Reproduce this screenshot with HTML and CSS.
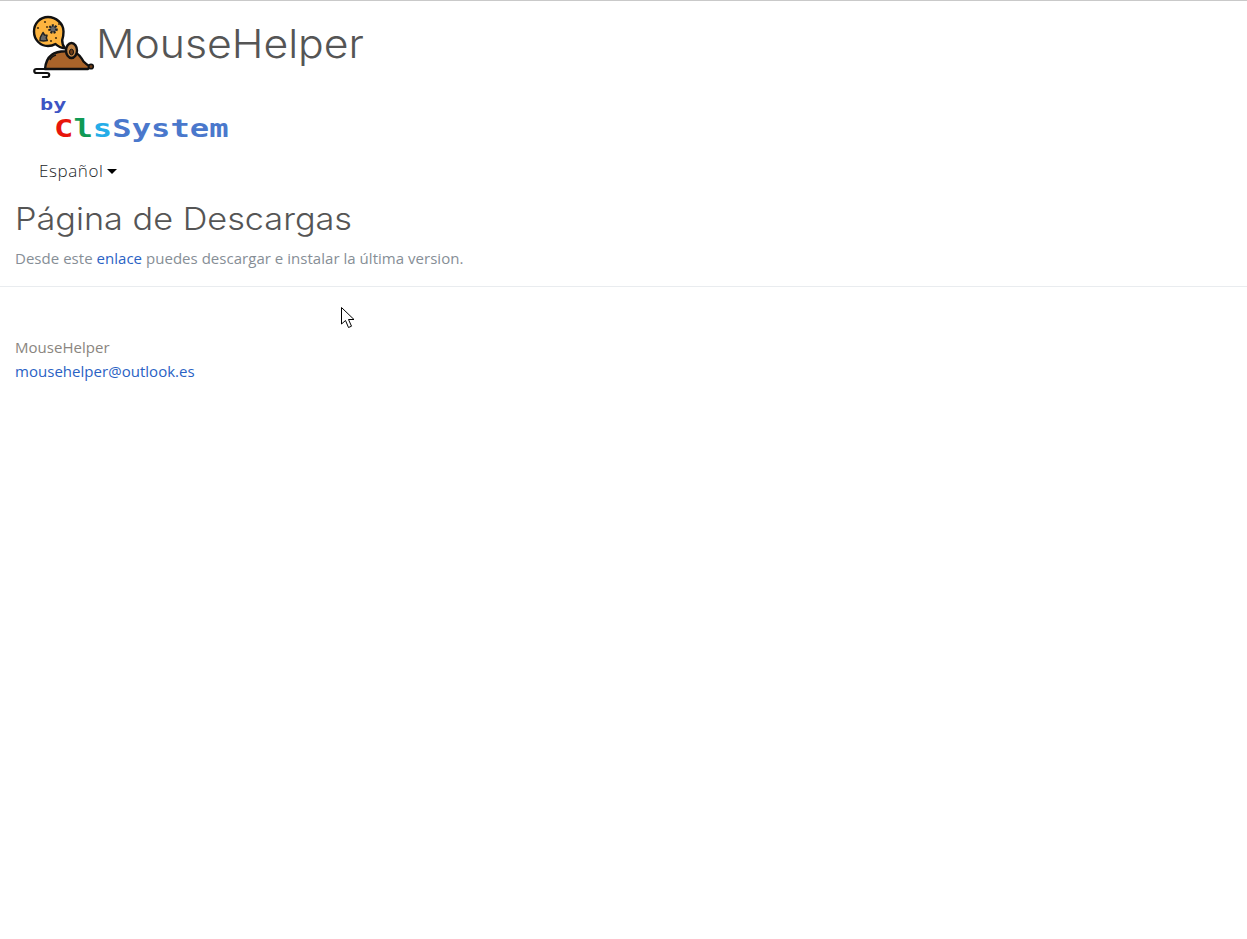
FILE: index.html
```html
<!DOCTYPE html>
<html lang="es">
<head>
<meta charset="utf-8">
<title>MouseHelper</title>
<link rel="stylesheet" href="styles.css">
</head>
<body>
<header class="top">
  <div class="brand">
    <svg class="logo" width="64" height="65" viewBox="0 0 64 65" aria-hidden="true">
      <path d="M16 4C8 4 2 10.500 2 18.500S8 33 16 33c3 0 5.500-.8 7.500-2 2.500 2.500 5.500 4 9.500 4.300-2-2.500-3-5-2.800-8.300.9-2.500 1.300-5 1.300-8.500C31.500 10.500 24 4 16 4Z" fill="#fdb43f" stroke="#111" stroke-width="2.400" stroke-linejoin="round"/>
      <circle cx="21" cy="16" r="3.500" fill="#666" stroke="#222" stroke-width="2.600" stroke-dasharray="1.800 1.200"/>
      <path d="M11 19.500l1.500 2.500 2.500.3-.7 2.700 1 2.500-3.800.5-3.500-.5.300-3 1-2Z" fill="#666" stroke="#222" stroke-width="1.500" stroke-linejoin="round"/>
      <g fill="#4a3210">
        <circle cx="13" cy="9" r="1.100"/><circle cx="24" cy="25" r="1.100"/><circle cx="19" cy="28" r="1.100"/><circle cx="6" cy="15" r="1.100"/><circle cx="27" cy="11" r="1"/><circle cx="15" cy="14" r="1"/>
      </g>
      <path d="M13 56c.5-6 2.500-11 6.500-14 3.500-2.800 8.500-3.800 14-3.800 4-.3 7 .3 10.500 1.800 3.500 1.500 5.500 5 7.500 8.500 2 2 4 3.500 6 5l-1.500 2.500H13Z" fill="#a9642a" stroke="#111" stroke-width="2.400" stroke-linejoin="round"/>
      <ellipse cx="39.500" cy="37.500" rx="5.500" ry="7.500" fill="#c08445" stroke="#111" stroke-width="2.400"/>
      <ellipse cx="39.500" cy="39" rx="2" ry="2.800" fill="#6d3c16" stroke="#111" stroke-width="1"/>
      <circle cx="59" cy="53.500" r="2.300" fill="#6d3c16" stroke="#111" stroke-width="1.600"/>
      <path d="M18 47c1-2.500 3-4 6-5" fill="none" stroke="#111" stroke-width="1.500"/>
      <path d="M14 56H4.500c-3 0-3 4 0 4H15c3 0 3 4 0 4H11" fill="none" stroke="#111" stroke-width="2.200" stroke-linecap="round"/>
    </svg>
    <span class="brand-name">MouseHelper</span>
  </div>
  <div class="byline">
    <div class="by">by</div>
    <div class="cls"><span class="c-red">C</span><span class="c-green">l</span><span class="c-sky">s</span><span class="c-blue">System</span></div>
  </div>
  <div class="lang"><span>Español</span><i class="caret"></i></div>
</header>
<main class="content">
  <h1 class="title">Página de Descargas</h1>
  <p class="lead">Desde este <a href="#">enlace</a> puedes descargar e instalar la última version.</p>
</main>
<hr class="rule">
<footer class="foot">
  <div>MouseHelper</div>
  <a href="#">mousehelper@outlook.es</a>
</footer>
<svg class="cursor" width="14" height="23" viewBox="0 0 14 23" aria-hidden="true">
  <path d="M.5.5V17l4-3.500 3 7 3-1.300-3-6.700H13Z" fill="#fff" stroke="#000" stroke-width="1"/>
</svg>
</body>
</html>
```

FILE: styles.css
```css
* { box-sizing: border-box; }
html, body { margin: 0; padding: 0; }
body {
  background: #fff;
  border-top: 1px solid #c9c9c9;
  font-family: "Open Sans", "Liberation Sans", sans-serif;
  font-size: 15px;
  letter-spacing: 0.03px;
  line-height: 24px;
  color: #868e96;
  min-height: 938px;
  position: relative;
}
a { color: #2a62c4; text-decoration: none; }
.top { padding: 12px 0 0 32px; }
.brand { display: flex; align-items: center; height: 62px; }
.logo { flex: none; align-self: flex-start; }
.brand-name {
  font-family: Inter, "Open Sans", sans-serif;
  font-weight: 300;
  font-size: 40px;
  letter-spacing: 0;
  line-height: 60px;
  color: #555;
  transform: scaleX(1.068);
  transform-origin: left center;
}
.byline { padding: 22px 0 0 8px; font-family: "DejaVu Sans Mono", "Liberation Mono", monospace; font-weight: 700; }
.by { width: fit-content; font-size: 16px; line-height: 16px; color: #3d55c4; transform: scaleX(1.37); transform-origin: left center; }
.cls { width: fit-content; margin-left: 14px; font-size: 24px; line-height: 33px; color: #4a78cc; transform: scaleX(1.34); transform-origin: left center; }
.c-red { color: #e8150c; }
.c-green { color: #0f9a55; }
.c-sky { color: #25ade8; }
.c-blue { color: #4a78cc; }
.lang { padding: 13px 0 0 7px; color: #212529; display: flex; align-items: center; font-size: 17px; font-weight: 300; letter-spacing: 0.6px; }
.caret { margin-left: 4px; width: 0; height: 0; border-left: 5px solid transparent; border-right: 5px solid transparent; border-top: 5px solid #000; }
.content { padding: 16px 15px 0; }
.title {
  width: fit-content;
  margin: 0;
  font-family: Inter, "Open Sans", sans-serif;
  font-weight: 300;
  font-size: 31px;
  letter-spacing: 0;
  line-height: 40px;
  color: #555;
  transform: scaleX(1.105);
  transform-origin: left center;
}
.lead { margin: 7px 0 0; }
.rule { margin: 16px 0 0; border: 0; border-top: 1px solid #e9ecef; }
.foot { padding: 48px 15px 0; display: flex; flex-direction: column; align-items: flex-start; color: #8a8580; }
.cursor { position: absolute; left: 341px; top: 306px; }
```
